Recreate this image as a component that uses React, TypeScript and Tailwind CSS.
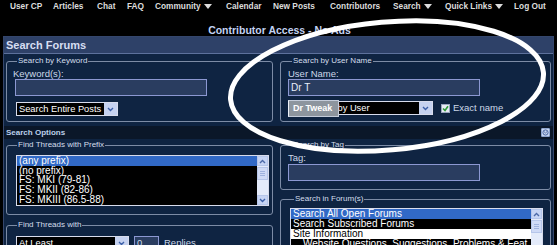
import type { ReactNode } from "react";

function Caret() {
  return <span className="ml-[3px] inline-block h-0 w-0 border-x-[4px] border-t-[5px] border-x-transparent border-t-[#dcdcdc] align-middle" />;
}

function Chevron() {
  return (
    <svg width="7" height="5" viewBox="0 0 7 5">
      <path d="M1 1 L3.5 3.5 L6 1" fill="none" stroke="#3b5fa8" strokeWidth="1.4" />
    </svg>
  );
}

function Box({ legend, children, className }: { legend: string; children: ReactNode; className: string }) {
  return (
    <fieldset className={`rounded-[3px] border border-[#7d8ca6] ${className}`}>
      <legend className="ml-[4px] px-[1px] text-[8px] leading-[10px] text-[#d4deec]">{legend}</legend>
      {children}
    </fieldset>
  );
}

function Select({ text, className }: { text: string; className: string }) {
  return (
    <div className={`flex h-[14px] border border-[#d8dcec] bg-black ${className}`}>
      <span className="flex-1 overflow-hidden whitespace-nowrap pl-[2px] text-[9.3px] leading-[12px] text-white">{text}</span>
      <span className="flex w-[13px] items-center justify-center bg-[#c6d2f0]">
        <Chevron />
      </span>
    </div>
  );
}

function Scrollbar() {
  return (
    <div className="flex w-[11px] flex-col bg-[#e4ebfa]">
      <div className="flex h-[10px] items-center justify-center border border-[#b6c6ea] bg-[#c6d4f4]">
        <svg width="7" height="5" viewBox="0 0 7 5">
          <path d="M1 4 L3.5 1.5 L6 4" fill="none" stroke="#4d6aa8" strokeWidth="1.4" />
        </svg>
      </div>
      <div className="mt-[1px] flex h-[13px] flex-col justify-center gap-[1px] border border-[#b6c6ea] bg-[#cfdaf6] px-[2px]">
        <div className="h-px bg-[#9fb2de]" />
        <div className="h-px bg-[#9fb2de]" />
        <div className="h-px bg-[#9fb2de]" />
      </div>
      <div className="flex-1" />
      <div className="flex h-[10px] items-center justify-center border border-[#b6c6ea] bg-[#c6d4f4]">
        <Chevron />
      </div>
    </div>
  );
}

export default function App() {
  const prefixes = ["(no prefix)", "FS: MKI (79-81)", "FS: MKII (82-86)", "FS: MKIII (86.5-88)"];

  return (
    <div className="relative h-[245px] w-[557px] overflow-hidden bg-black font-['Liberation_Sans',Arial,sans-serif]">
      <nav className="flex h-[13px] pl-[10px] text-[8.3px] font-bold leading-[13px] text-[#dcdcdc]">
        <span className="w-[43px]">User CP</span>
        <span className="w-[44px]">Articles</span>
        <span className="w-[30px]">Chat</span>
        <span className="w-[28px]">FAQ</span>
        <span className="w-[71px]">Community<Caret /></span>
        <span className="w-[47px]">Calendar</span>
        <span className="w-[57px]">New Posts</span>
        <span className="w-[63px]">Contributors</span>
        <span className="w-[52px]">Search<Caret /></span>
        <span className="w-[69px]">Quick Links<Caret /></span>
        <span>Log Out</span>
      </nav>

      <div className="mt-[12px] h-[11px] pl-[2px] text-center text-[10.5px] font-bold leading-[11px] text-[#c3d3f3]">
        Contributor Access - No Ads
      </div>

      <div className="ml-[3px] w-[551px] border border-[#34466c] bg-[#0f2442]">
        <div className="h-[17px] border-b border-[#5d719c] bg-[#2e4168] pl-[2px] text-[11px] font-bold leading-[17px] text-[#d6def2]">
          Search Forums
        </div>

        <div className="flex gap-[7px] px-[2px] pt-[2px]">
          <Box legend="Search by Keyword" className="w-[267px] pb-[5px] pl-[6px]">
            <div className="mt-[3px] text-[9.5px] leading-[10px] text-[#ccd8e8]">Keyword(s):</div>
            <div className="ml-[2px] h-[17px] w-[192px] border border-[#8c98d2] bg-[#2a3d60]" />
            <Select text="Search Entire Posts" className="ml-[3px] mt-[6px] w-[102px]" />
          </Box>

          <Box legend="Search by User Name" className="w-[271px] pb-[5px] pl-[7px]">
            <div className="mt-[3px] text-[9.5px] leading-[10px] text-[#ccd8e8]">User Name:</div>
            <div className="h-[17px] w-[192px] border border-[#8c98d2] bg-[#2a3d60] pl-[2px] text-[10px] leading-[15px] text-[#e8eef8]">
              Dr T
            </div>
            <div className="mt-[5px] flex items-center">
              <div className="relative">
                <Select text="Find Posts by User" className="w-[145px]" />
                <div className="absolute left-0 top-[-1px] h-[17px] w-[51px] border border-[#c4ccda] border-l-[#eef2f8] bg-[#8d959e] pl-[4px] text-[9px] font-bold leading-[15px] text-white">
                  Dr Tweak
                </div>
              </div>
              <span className="ml-[8px] flex h-[9px] w-[9px] items-center justify-center border border-[#9aa6c0] bg-[#e8ecf4]">
                <svg width="7" height="7" viewBox="0 0 7 7">
                  <path d="M1 3.5 L3 5.5 L6 1.2" fill="none" stroke="#2e9a3a" strokeWidth="1.6" />
                </svg>
              </span>
              <span className="ml-[3px] text-[9.5px] text-[#ccd8e8]">Exact name</span>
            </div>
          </Box>
        </div>

        <div className="mt-[4px] flex h-[13px] items-center justify-between bg-[#0b1729] pl-[2px] pr-[3px]">
          <span className="text-[8px] font-bold text-[#bcd0ea]">Search Options</span>
          <span className="flex h-[9px] w-[9px] items-center justify-center rounded-[1px] border border-[#8fa6d0] bg-[#c9d6f0]">
            <svg width="7" height="7" viewBox="0 0 7 7">
              <circle cx="3.5" cy="3.5" r="2.6" fill="none" stroke="#4a66a0" strokeWidth="1" />
              <path d="M2 2.6 L3.5 4 L5 2.6" fill="none" stroke="#4a66a0" strokeWidth="0.9" />
            </svg>
          </span>
        </div>

        <div className="flex gap-[7px] px-[2px] pt-[1px]">
          <div className="flex w-[267px] flex-col gap-[5px]">
            <Box legend="Find Threads with Prefix" className="pb-[8px] pl-[6px]">
              <div className="ml-[3px] mt-[5px] flex h-[51px] w-[253px] border border-[#d8dcec] bg-black">
                <div className="flex-1 text-[10px] leading-[9.7px] text-white">
                  <div className="bg-[#3169c6] pl-[2px]">(any prefix)</div>
                  {prefixes.map((p) => (
                    <div key={p} className="pl-[2px]">{p}</div>
                  ))}
                </div>
                <Scrollbar />
              </div>
            </Box>
            <Box legend="Find Threads with" className="h-[40px] pl-[6px]">
              <div className="mt-[6px] flex items-center">
                <Select text="At Least" className="ml-[3px] w-[113px]" />
                <div className="ml-[5px] h-[14px] w-[25px] border border-[#8c98d2] bg-[#2a3d60] pl-[2px] text-[9.5px] leading-[12px] text-[#ccd8e8]">0</div>
                <span className="ml-[5px] text-[9.5px] text-[#ccd8e8]">Replies</span>
              </div>
            </Box>
          </div>

          <div className="flex w-[271px] flex-col gap-[4px]">
            <Box legend="Search by Tag" className="pb-[8px] pl-[7px]">
              <div className="mt-[3px] text-[9.5px] leading-[10px] text-[#ccd8e8]">Tag:</div>
              <div className="mt-[1px] h-[17px] w-[192px] border border-[#8c98d2] bg-[#2a3d60]" />
            </Box>
            <Box legend="Search in Forum(s)" className="h-[60px] pl-[9px]">
              <div className="mt-[4px] flex h-[60px] w-[253px] border border-[#d8dcec] bg-black">
                <div className="flex-1 text-[10px] leading-[10px] text-white">
                  <div className="bg-[#3169c6] pl-[2px]">Search All Open Forums</div>
                  <div className="pl-[2px]">Search Subscribed Forums</div>
                  <div className="bg-white pl-[2px] text-black">Site Information</div>
                  <div className="whitespace-nowrap pl-[12px]">Website Questions, Suggestions, Problems &amp; Feat</div>
                </div>
                <Scrollbar />
              </div>
            </Box>
          </div>
        </div>
      </div>

      <svg className="pointer-events-none absolute left-0 top-0" width="557" height="245">
        <ellipse cx="387" cy="86" rx="157" ry="64" transform="rotate(-5 387 86)" fill="none" stroke="white" strokeWidth="5" />
      </svg>
    </div>
  );
}
